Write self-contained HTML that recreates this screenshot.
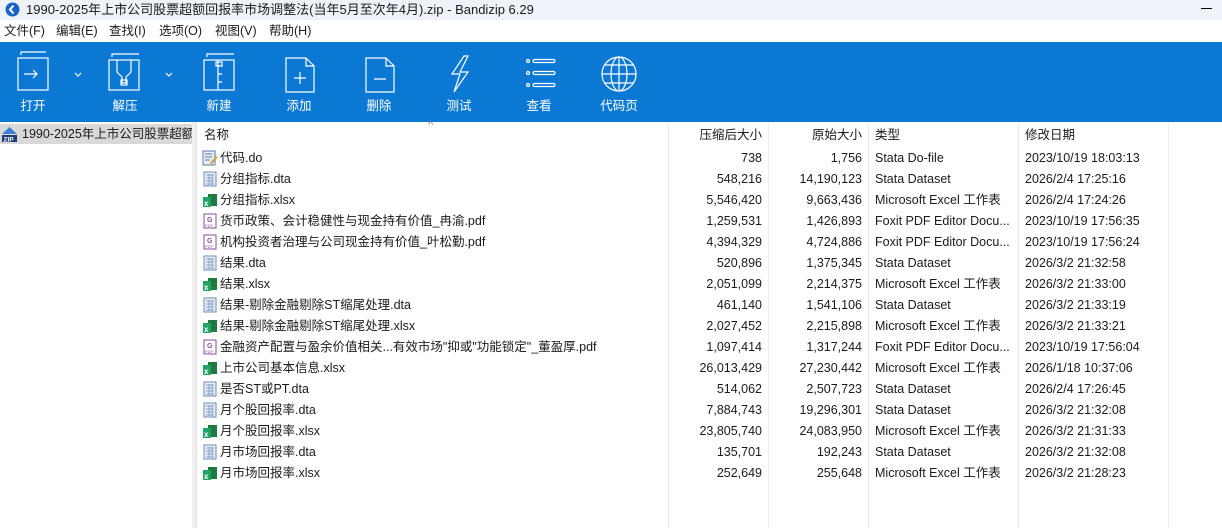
<!DOCTYPE html><html><head><meta charset="utf-8"><style>
*{margin:0;padding:0;box-sizing:border-box}
body{width:1222px;height:528px;overflow:hidden;background:#fff;font-family:"Liberation Sans","Noto Sans CJK SC",sans-serif;font-size:12.5px;color:#1a1a1a;position:relative}
.a{position:absolute;white-space:nowrap;line-height:16px}
#title{left:0;top:0;width:1222px;height:20px;background:#edf3f9}
#menu{left:0;top:20px;width:1222px;height:22px;background:#fff}
#tb{left:0;top:42px;width:1222px;height:80px;background:#0b78d4}
.lbl{color:#fff;font-size:12.5px;top:98px;width:60px;text-align:center}
.r{text-align:right}
.m{top:23px;font-size:12.5px}
.vl{position:absolute;top:122px;height:406px;width:1px;background:#ececec}
</style></head><body>
<div class="a" id="title"></div>
<svg class="a" style="left:5px;top:2px" width="15" height="15"><circle cx="7.5" cy="7.5" r="7" fill="#1a62c4"/><path d="M8.5 3.5 L5 7.5 L8.5 11.5" stroke="#fff" stroke-width="2" fill="none"/></svg>
<div class="a" style="left:26px;top:2px;font-size:13px">1990-2025年上市公司股票超额回报率市场调整法(当年5月至次年4月).zip - Bandizip 6.29</div>
<div class="a" style="left:1201px;top:8px;width:11px;height:1px;background:#000"></div>
<div class="a" id="menu"></div>
<div class="a m" style="left:4px">文件(F)</div>
<div class="a m" style="left:56px">编辑(E)</div>
<div class="a m" style="left:109px">查找(I)</div>
<div class="a m" style="left:159px">选项(O)</div>
<div class="a m" style="left:215px">视图(V)</div>
<div class="a m" style="left:269px">帮助(H)</div>
<div class="a" id="tb"></div>
<svg class="a" style="left:0;top:42px;line-height:0" width="700" height="60" fill="none" stroke="#fff" stroke-width="1.2">
<rect x="18" y="16" width="30" height="32"/><path d="M21 13v-3h25M24 32h13M33 28l4 4-4 4"/>
<path d="M75 31l3 3 3-3"/>
<rect x="109" y="18" width="30" height="30"/><path d="M112 15v-3h27M117 18v12l5 5v6h4v-6l5-5V18"/><rect x="121" y="38" width="6" height="5"/>
<path d="M166 31l3 3 3-3"/>
<rect x="204" y="18" width="30" height="30"/><path d="M207 15v-3h27M218 18v30M218 24h4M218 32h4M218 40h4"/><rect x="216" y="20" width="6" height="4"/>
<path d="M286 16h20l8 8v26h-28zM306 16v8h8M300 30v12M294 36h12"/>
<path d="M366 16h20l8 8v26h-28zM386 16v8h8M374 37h12"/>
<path d="M464 14l-12 18h8l-6 18 14-20h-8l8-16z"/>
<circle cx="528" cy="19" r="1.5"/><circle cx="528" cy="31" r="1.5"/><circle cx="528" cy="43" r="1.5"/>
<rect x="533" y="17.5" width="22" height="3" rx="1.5"/><rect x="533" y="29.5" width="22" height="3" rx="1.5"/><rect x="533" y="41.5" width="22" height="3" rx="1.5"/>
<circle cx="619" cy="32" r="17"/><ellipse cx="619" cy="32" rx="8" ry="17"/><path d="M602 32h34M619 15v34M605 23h28M605 41h28"/>
</svg>
<div class="a lbl" style="left:3px">打开</div>
<div class="a lbl" style="left:95px">解压</div>
<div class="a lbl" style="left:189px">新建</div>
<div class="a lbl" style="left:269px">添加</div>
<div class="a lbl" style="left:349px">删除</div>
<div class="a lbl" style="left:429px">测试</div>
<div class="a lbl" style="left:509px">查看</div>
<div class="a lbl" style="left:589px">代码页</div>
<div class="a" style="left:0;top:124px;width:192px;height:20px;background:#d9d9d9"></div>
<svg class="a" style="left:1px;top:126px" width="17" height="17"><path d="M8.5 1L16 8H1z" fill="#3c7fd4"/><rect x="1" y="9" width="15" height="7" fill="#1f3f7a"/><text x="2.5" y="15.5" font-size="6.5" fill="#fff" font-family="Liberation Sans" font-weight="bold">ZIP</text></svg>
<div class="a" style="left:22px;top:126px;width:170px;overflow:hidden">1990-2025年上市公司股票超额</div>
<div class="a" style="left:192px;top:122px;width:5px;height:406px;background:#f0f0f0;border-right:1px solid #dcdcdc"></div>
<div class="vl" style="left:668px"></div><div class="vl" style="left:768px"></div><div class="vl" style="left:868px"></div><div class="vl" style="left:1018px"></div><div class="vl" style="left:1168px"></div>
<div class="a" style="left:428px;top:117px;font-size:11px;color:#777">^</div>
<div class="a" style="left:204px;top:127px">名称</div>
<div class="a r" style="left:660px;top:127px;width:102px">压缩后大小</div>
<div class="a r" style="left:760px;top:127px;width:102px">原始大小</div>
<div class="a" style="left:875px;top:127px">类型</div>
<div class="a" style="left:1025px;top:127px">修改日期</div>
<div id="rows"></div>
<script>
var d=[["do","代码.do","738","1,756","Stata Do-file","2023/10/19 18:03:13"],
["dta","分组指标.dta","548,216","14,190,123","Stata Dataset","2026/2/4 17:25:16"],
["x","分组指标.xlsx","5,546,420","9,663,436","Microsoft Excel 工作表","2026/2/4 17:24:26"],
["p","货币政策、会计稳健性与现金持有价值_冉渝.pdf","1,259,531","1,426,893","Foxit PDF Editor Docu...","2023/10/19 17:56:35"],
["p","机构投资者治理与公司现金持有价值_叶松勤.pdf","4,394,329","4,724,886","Foxit PDF Editor Docu...","2023/10/19 17:56:24"],
["dta","结果.dta","520,896","1,375,345","Stata Dataset","2026/3/2 21:32:58"],
["x","结果.xlsx","2,051,099","2,214,375","Microsoft Excel 工作表","2026/3/2 21:33:00"],
["dta","结果-剔除金融剔除ST缩尾处理.dta","461,140","1,541,106","Stata Dataset","2026/3/2 21:33:19"],
["x","结果-剔除金融剔除ST缩尾处理.xlsx","2,027,452","2,215,898","Microsoft Excel 工作表","2026/3/2 21:33:21"],
["p","金融资产配置与盈余价值相关...有效市场\"抑或\"功能锁定\"_董盈厚.pdf","1,097,414","1,317,244","Foxit PDF Editor Docu...","2023/10/19 17:56:04"],
["x","上市公司基本信息.xlsx","26,013,429","27,230,442","Microsoft Excel 工作表","2026/1/18 10:37:06"],
["dta","是否ST或PT.dta","514,062","2,507,723","Stata Dataset","2026/2/4 17:26:45"],
["dta","月个股回报率.dta","7,884,743","19,296,301","Stata Dataset","2026/3/2 21:32:08"],
["x","月个股回报率.xlsx","23,805,740","24,083,950","Microsoft Excel 工作表","2026/3/2 21:31:33"],
["dta","月市场回报率.dta","135,701","192,243","Stata Dataset","2026/3/2 21:32:08"],
["x","月市场回报率.xlsx","252,649","255,648","Microsoft Excel 工作表","2026/3/2 21:28:23"]];
var ic={do:'<rect x="1" y="1" width="12" height="14" fill="#e8eef6" stroke="#5a7aa8"/><path d="M3 4h7M3 7h7M3 10h5" stroke="#5a7aa8"/><path d="M8 13l6-7 1.5 1.5-6 7z" fill="#c8a040"/>',
dta:'<rect x="2" y="1" width="12" height="14" fill="#e8eef6" stroke="#6d8bb5"/><path d="M4 4h8M4 7h8M4 10h8M4 13h8M7 3v11M10 3v11" stroke="#8aa4c8"/>',
x:'<rect x="6" y="2" width="9" height="12" fill="#1f7a3e"/><rect x="1" y="5" width="8" height="10" fill="#21a366"/><text x="2" y="14" font-size="8" fill="#fff" font-family="Liberation Sans" font-weight="bold">x</text>',
p:'<rect x="2" y="1" width="12" height="14" fill="#fff" stroke="#8a4d9a"/><text x="5" y="9" font-size="7" fill="#8a4d9a" font-weight="bold" font-family="Liberation Sans">G</text><text x="3" y="14" font-size="4" fill="#8a4d9a" font-family="Liberation Sans">PDF</text>'};
var h='';d.forEach(function(r,i){var y=150+i*21;
h+='<svg class="a" style="left:202px;top:'+y+'px" width="16" height="16">'+ic[r[0]]+'</svg>'+
'<div class="a" style="left:220px;top:'+y+'px">'+r[1]+'</div>'+
'<div class="a r" style="left:660px;top:'+y+'px;width:102px">'+r[2]+'</div>'+
'<div class="a r" style="left:760px;top:'+y+'px;width:102px">'+r[3]+'</div>'+
'<div class="a" style="left:875px;top:'+y+'px">'+r[4]+'</div>'+
'<div class="a" style="left:1025px;top:'+y+'px">'+r[5]+'</div>';});
document.getElementById('rows').innerHTML=h;
</script>
</body></html>
